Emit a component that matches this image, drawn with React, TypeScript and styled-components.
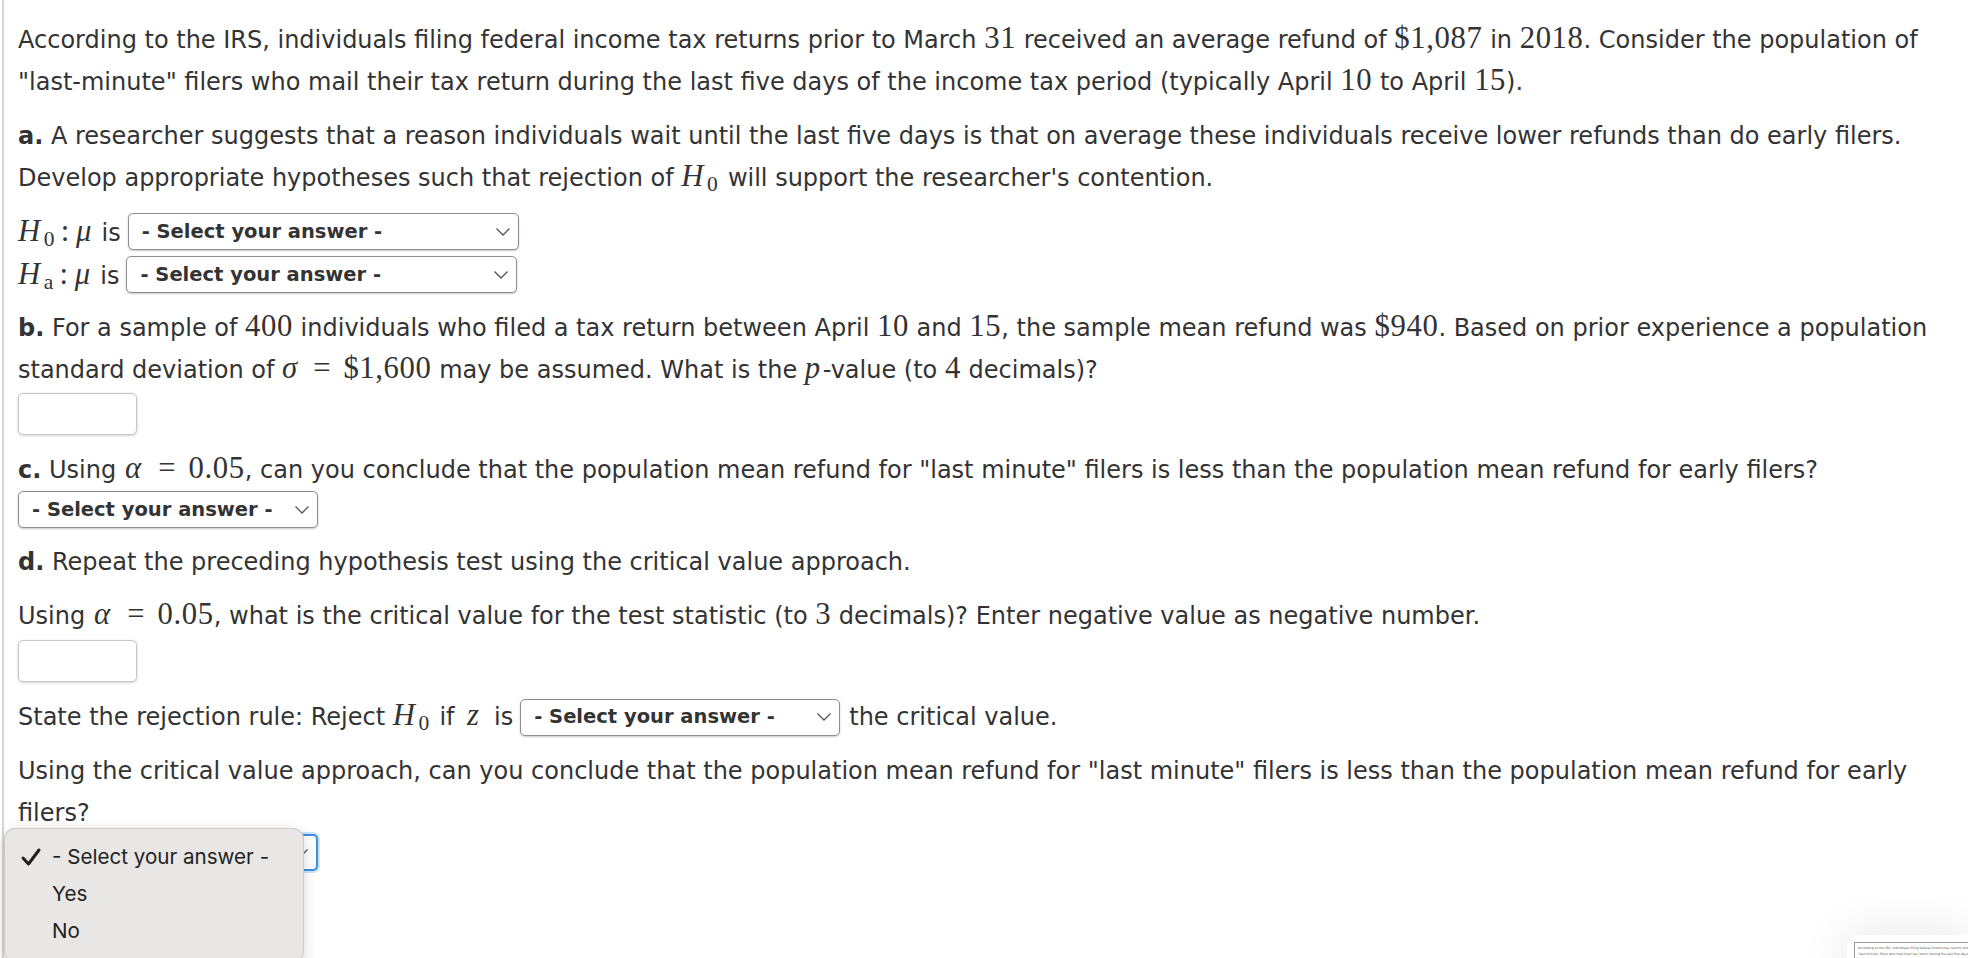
import React from "react";
import styled, { createGlobalStyle } from "styled-components";

const GlobalStyle = createGlobalStyle`
  html, body {
    margin: 0;
    padding: 0;
    background: #ffffff;
  }
  body {
    font-family: Verdana, "DejaVu Sans", sans-serif;
    font-size: 24px;
    color: #333333;
  }
`;

const Page = styled.div`
  position: relative;
  min-height: 958px;
  padding-left: 2px;
  box-sizing: border-box;
  overflow: hidden;
`;

const Frame = styled.div`
  border-left: 2px solid #d4d4d4;
  min-height: 958px;
  box-sizing: border-box;
  padding: 19px 20px 0 14px;
`;

const Para = styled.p<{ $gap?: number }>`
  margin: 0 0 ${(p) => (p.$gap ?? 11)}px;
  line-height: 42px;
  white-space: nowrap;
`;

const Tag = styled.b`
  font-weight: bold;
`;

const M = styled.span<{ $it?: boolean; $pad?: number }>`
  font-family: "Liberation Serif", "DejaVu Serif", serif;
  font-size: 1.28em;
  line-height: 1;
  letter-spacing: 0.02em;
  font-style: ${(p) => (p.$it ? "italic" : "normal")};
  padding: 0 ${(p) => (p.$it ? 0.06 + (p.$pad ?? 0) : 0)}em 0 ${(p) => p.$pad ?? 0}em;
`;

const Eq = styled.span`
  margin: 0 0.4em 0 0.44em;
`;

const Sub = styled.span`
  font-family: "Liberation Serif", "DejaVu Serif", serif;
  font-style: normal;
  font-size: 0.7em;
  position: relative;
  top: 0.24em;
  margin-left: 3px;
`;

const Colon = styled.span`
  font-family: "Liberation Serif", "DejaVu Serif", serif;
  font-size: 1.28em;
  margin: 0 0.22em 0 0.12em;
`;

const HypRow = styled.div`
  display: flex;
  align-items: center;
  height: 43px;
  white-space: nowrap;
`;

const HypGroup = styled.div`
  margin-bottom: 11px;
`;

const Lead = styled.span`
  margin-right: 7px;
`;

const SelectBox = styled.div<{ $w: number; $focus?: boolean }>`
  display: inline-flex;
  align-items: center;
  justify-content: space-between;
  box-sizing: border-box;
  width: ${(p) => p.$w}px;
  height: 37px;
  padding: 0 7px 0 13px;
  border: ${(p) => (p.$focus ? "2px solid #3a8ee6" : "1px solid #8d8d8d")};
  border-radius: 5px;
  background: #ffffff;
  box-shadow: ${(p) =>
    p.$focus ? "0 0 0 2px rgba(58,142,230,0.25)" : "0 1px 2px rgba(0,0,0,0.22)"};
  font-size: 19.5px;
  font-weight: bold;
  color: #333333;
  vertical-align: middle;
`;

const SelectLabel = styled.span<{ $hidden?: boolean }>`
  visibility: ${(p) => (p.$hidden ? "hidden" : "visible")};
`;

const Chevron = () => (
  <svg width="16" height="10" viewBox="0 0 16 10">
    <polyline points="1.5,1.5 8,8 14.5,1.5" fill="none" stroke="#555" strokeWidth="1.3" />
  </svg>
);

const Select = ({ w, focus }: { w: number; focus?: boolean }) => (
  <SelectBox $w={w} $focus={focus}>
    <SelectLabel $hidden={focus}>- Select your answer -</SelectLabel>
    <Chevron />
  </SelectBox>
);

const InputBox = styled.div<{ $top: number }>`
  width: 119px;
  height: 42px;
  box-sizing: border-box;
  margin: ${(p) => p.$top}px 0 14px;
  border: 1px solid #c6c6c6;
  border-radius: 5px;
  box-shadow: 0 1px 3px rgba(0, 0, 0, 0.18);
  background: #ffffff;
`;

const Block = styled.div<{ $gap?: number }>`
  margin-bottom: ${(p) => (p.$gap ?? 0)}px;
`;

const InlineSelect = styled.span`
  display: inline-block;
  margin: 0 9px 0 7px;
  vertical-align: middle;
  position: relative;
  top: -2px;
`;

const Anchor = styled.div`
  position: relative;
  width: 300px;
`;

const Menu = styled.div`
  position: absolute;
  left: -14px;
  top: -6px;
  width: 300px;
  height: 134px;
  box-sizing: border-box;
  padding-top: 9px;
  background: #e9e7e6;
  border: 1px solid rgba(0, 0, 0, 0.12);
  border-radius: 11px;
  box-shadow: 0 4px 14px rgba(0, 0, 0, 0.16);
  font-family: Inter, "Liberation Sans", sans-serif;
  font-size: 20.6px;
  color: #222222;
`;

const MenuItem = styled.div`
  display: flex;
  align-items: center;
  height: 37px;
  padding-left: 15px;
`;

const CheckSlot = styled.span`
  width: 32px;
  display: inline-flex;
  align-items: center;
`;

const Check = () => (
  <svg width="22" height="20" viewBox="0 0 22 20">
    <path d="M3 11 L8.5 17 L19 3" fill="none" stroke="#1e1e1e" strokeWidth="3" strokeLinecap="round" strokeLinejoin="round" />
  </svg>
);

const Thumb = styled.div`
  position: absolute;
  left: 1847px;
  top: 935px;
  width: 121px;
  height: 60px;
  padding: 7px 0 0 7px;
  box-sizing: border-box;
  background: #ffffff;
  border-radius: 10px 0 0 0;
  box-shadow: 0 0 50px rgba(0, 0, 0, 0.1);
  overflow: hidden;
`;

const ThumbInner = styled.div`
  border: 1px solid #9a9a9a;
  border-right: none;
  padding: 2px 3px;
  font-size: 3.2px;
  line-height: 6px;
  color: #555555;
  white-space: nowrap;
  overflow: hidden;
`;

const H = ({ sub }: { sub: string }) => (
  <M $it>
    H<Sub>{sub}</Sub>
  </M>
);

export default function App() {
  return (
    <Page>
      <GlobalStyle />
      <Frame>
        <Para $gap={12}>
          According to the IRS, individuals filing federal income tax returns prior to March <M>31</M> received an
          average refund of <M>$1,087</M> in <M>2018</M>. Consider the population of
          <br />
          "last-minute" filers who mail their tax return during the last five days of the income tax period (typically
          April <M>10</M> to April <M>15</M>).
        </Para>

        <Para $gap={11}>
          <Tag>a.</Tag> A researcher suggests that a reason individuals wait until the last five days is that on average
          these individuals receive lower refunds than do early filers.
          <br />
          Develop appropriate hypotheses such that rejection of <H sub="0" /> will support the researcher's contention.
        </Para>

        <HypGroup>
          <HypRow>
            <Lead>
              <H sub="0" />
              <Colon>:</Colon>
              <M $it>μ</M> is
            </Lead>
            <Select w={391} />
          </HypRow>
          <HypRow>
            <Lead>
              <H sub="a" />
              <Colon>:</Colon>
              <M $it>μ</M> is
            </Lead>
            <Select w={391} />
          </HypRow>
        </HypGroup>

        <Para $gap={0}>
          <Tag>b.</Tag> For a sample of <M>400</M> individuals who filed a tax return between April <M>10</M> and{" "}
          <M>15</M>, the sample mean refund was <M>$940</M>. Based on prior experience a population
          <br />
          standard deviation of <M $it>σ</M>
          <M>
            <Eq>=</Eq>$1,600
          </M>{" "}
          may be assumed. What is the <M $it>p</M>-value (to <M>4</M> decimals)?
        </Para>
        <InputBox $top={2} />

        <Para $gap={0}>
          <Tag>c.</Tag> Using <M $it $pad={0.04}>α</M>
          <M>
            <Eq>=</Eq>0.05
          </M>
          , can you conclude that the population mean refund for "last minute" filers is less than the population mean
          refund for early filers?
        </Para>
        <Block $gap={13}>
          <Select w={300} />
        </Block>

        <Para $gap={12}>
          <Tag>d.</Tag> Repeat the preceding hypothesis test using the critical value approach.
        </Para>

        <Para $gap={0}>
          Using <M $it $pad={0.04}>α</M>
          <M>
            <Eq>=</Eq>0.05
          </M>
          , what is the critical value for the test statistic (to <M>3</M> decimals)? Enter negative value as negative
          number.
        </Para>
        <InputBox $top={3} />

        <Para $gap={11}>
          State the rejection rule: Reject <H sub="0" /> if{" "}
          <M $it $pad={0.16}>
            z
          </M>{" "}
          is
          <InlineSelect>
            <Select w={320} />
          </InlineSelect>
          the critical value.
        </Para>

        <Para $gap={0}>
          Using the critical value approach, can you conclude that the population mean refund for "last minute" filers
          is less than the population mean refund for early
          <br />
          filers?
        </Para>
        <Anchor>
          <Select w={300} focus />
          <Menu>
            <MenuItem>
              <CheckSlot>
                <Check />
              </CheckSlot>
              - Select your answer -
            </MenuItem>
            <MenuItem>
              <CheckSlot />
              Yes
            </MenuItem>
            <MenuItem>
              <CheckSlot />
              No
            </MenuItem>
          </Menu>
        </Anchor>
      </Frame>

      <Thumb>
        <ThumbInner>
          According to the IRS, individuals filing federal income tax returns prior to March 31 received an average
          <br />
          "last-minute" filers who mail their tax return during the last five days of the income tax period
        </ThumbInner>
      </Thumb>
    </Page>
  );
}
